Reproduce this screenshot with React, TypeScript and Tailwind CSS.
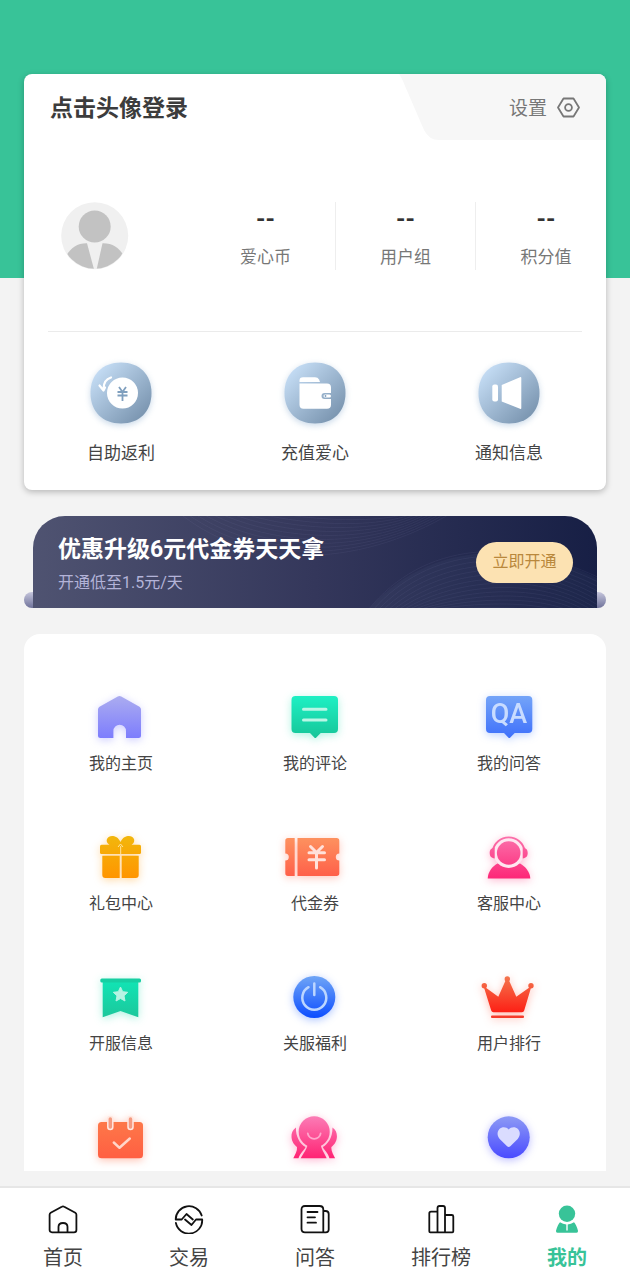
import type { ReactNode } from "react";

type Item = {
  label: string;
  icon: ReactNode;
  glow?: string;
  hideLabel?: boolean;
};

function Gradient({ id, from, to }: { id: string; from: string; to: string }) {
  return (
    <defs>
      <linearGradient id={id} x1="0" y1="4" x2="0" y2="46" gradientUnits="userSpaceOnUse">
        <stop offset="0" stopColor={from} />
        <stop offset="1" stopColor={to} />
      </linearGradient>
    </defs>
  );
}

const stats = ["爱心币", "用户组", "积分值"];

// 卡片底部的三个快捷入口
const actions: Item[] = [
  {
    label: "自助返利",
    icon: (
      <>
        <path
          d="M21 15.500C16 17 13.500 21 13.500 27M9.500 23.500L13.500 28.500L15 25.500"
          fill="none"
          stroke="#fff"
          strokeWidth="2.200"
          strokeLinecap="round"
          strokeLinejoin="round"
        />
        <circle cx="32.500" cy="31" r="15.500" fill="#fff" />
        <path
          d="M29 25L32.500 30L36 25M27.500 30H37.500M27.500 33.500H37.500M32.500 30V39"
          fill="none"
          stroke="#7f9fbe"
          strokeWidth="1.800"
        />
      </>
    ),
  },
  {
    label: "充值爱心",
    icon: (
      <>
        <path d="M15.500 20V18.500Q15.500 15.300 19 15.300H31Q34 15.300 35 17.500L36 20Z" fill="#fff" />
        <path
          d="M15.500 21.500H43Q47 21.500 47 25.500V31H40.500A3 3 0 0 0 40.500 37H47V42.700Q47 46.700 43 46.700H19.500Q15.500 46.700 15.500 42.700Z"
          fill="#fff"
        />
        <rect x="39.500" y="32.500" width="7.500" height="3" rx="1.500" fill="#fff" />
        <circle cx="41.500" cy="34" r="0.900" fill="#7f9fbe" />
      </>
    ),
  },
  {
    label: "通知信息",
    icon: (
      <>
        <rect x="14.300" y="22.500" width="5.700" height="17" rx="2" fill="#fff" />
        <path d="M23.700 23L42 15.200Q43.300 14.700 43.300 16V46Q43.300 47.300 42 46.700L23.700 39.500Z" fill="#fff" />
      </>
    ),
  },
];

// 功能宫格
const features: Item[] = [
  {
    label: "我的主页",
    glow: "drop-shadow-[0_2px_4px_rgba(130,130,255,0.4)]",
    icon: (
      <>
        <Gradient id="g-home" from="#abacf0" to="#7d7dfd" />
        <path
          d="M26.800 4.600Q28.500 3.600 30.200 4.600L48.500 14.800Q50 15.800 50 17.500V43.500Q50 46 47.500 46H35V39A6.300 6.300 0 0 0 22.400 39V46H9.500Q7 46 7 43.500V17.500Q7 15.800 8.500 14.800Z"
          fill="url(#g-home)"
        />
      </>
    ),
  },
  {
    label: "我的评论",
    glow: "drop-shadow-[0_2px_4px_rgba(20,220,170,0.35)]",
    icon: (
      <>
        <Gradient id="g-comment" from="#1ef0c4" to="#16c598" />
        <path
          d="M10.500 4H49Q53 4 53 8V37Q53 41 49 41H35.700L31.300 45.500Q30.300 46.500 29.300 45.500L25 41H10.500Q6.500 41 6.500 37V8Q6.500 4 10.500 4Z"
          fill="url(#g-comment)"
        />
        <path d="M18.500 17.300H41M18.500 28H41" stroke="#b9f6e5" strokeWidth="3" strokeLinecap="round" />
      </>
    ),
  },
  {
    label: "我的问答",
    glow: "drop-shadow-[0_2px_4px_rgba(60,120,255,0.35)]",
    icon: (
      <>
        <Gradient id="g-qa" from="#74a4f8" to="#3e70fb" />
        <path
          d="M11 4H49.300Q53.300 4 53.300 8V37Q53.300 41 49.300 41H35.700L31.300 45.500Q30.300 46.500 29.300 45.500L25 41H11Q7 41 7 37V8Q7 4 11 4Z"
          fill="url(#g-qa)"
        />
        <text x="30" y="31" textAnchor="middle" fontSize="27" fontWeight="500" fill="#c9dcff">
          QA
        </text>
      </>
    ),
  },
  {
    label: "礼包中心",
    glow: "drop-shadow-[0_2px_4px_rgba(255,150,0,0.35)]",
    icon: (
      <>
        <Gradient id="g-gift" from="#f2b70c" to="#ff9500" />
        <g fill="url(#g-gift)">
          <path d="M29.500 10C27.500 5.500 24 4 21 4C16.500 4 14.500 8 16.500 11L19 13.500H40L42.500 11C44.500 8 42.500 4 38 4C35 4 31.500 5.500 29.500 10Z" />
          <rect x="9" y="12.700" width="41" height="9.200" rx="1.500" />
          <path d="M11.300 23.700H28.700V46H14.300Q11.300 46 11.300 43ZM30.700 23.700H47.700V43Q47.700 46 44.700 46H30.700Z" />
        </g>
        <path d="M27 15L29.500 12L32 15M29.700 14V22" fill="none" stroke="#ffe3a0" strokeWidth="1" />
      </>
    ),
  },
  {
    label: "代金券",
    glow: "drop-shadow-[0_2px_4px_rgba(255,100,70,0.35)]",
    icon: (
      <>
        <Gradient id="g-coupon" from="#fd9460" to="#ff5d48" />
        <path
          d="M3 6H9.700V44H3Q0.300 44 0.300 41.300V28.500A3.500 3.500 0 0 0 0.300 21.500V8.700Q0.300 6 3 6ZM12.500 6H51.500Q54.300 6 54.300 8.700V21.500A3.500 3.500 0 0 0 54.300 28.500V41.300Q54.300 44 51.500 44H12.500Z"
          fill="url(#g-coupon)"
        />
        <path
          d="M25.500 14.500L31.500 20.500L37.500 14.500M24 20.700H39.500M24 27.700H39.500M31.500 20.700V36"
          fill="none"
          stroke="#ffe1da"
          strokeWidth="3"
          strokeLinecap="round"
        />
      </>
    ),
  },
  {
    label: "客服中心",
    glow: "drop-shadow-[0_2px_4px_rgba(255,60,130,0.35)]",
    icon: (
      <>
        <Gradient id="g-service" from="#fb72ac" to="#fd2878" />
        <path d="M8.700 46.500C9 40 13 34.500 18.500 31.500H41C46.500 34.500 51 40 51.300 46.500Z" fill="url(#g-service)" />
        <circle cx="29.700" cy="21" r="15" fill="#ffe6f0" />
        <circle cx="29.700" cy="21" r="11.800" fill="url(#g-service)" />
        <path d="M13.700 19A16.200 16.200 0 0 1 45.700 19" fill="none" stroke="url(#g-service)" strokeWidth="1.800" />
        <path
          d="M15.700 15.500V26.500C12 26 10.700 24 10.700 21S12 16 15.700 15.500ZM43.700 15.500V26.500C47.400 26 48.700 24 48.700 21S47.400 16 43.700 15.500Z"
          fill="url(#g-service)"
        />
      </>
    ),
  },
  {
    label: "开服信息",
    glow: "drop-shadow-[0_2px_4px_rgba(20,220,170,0.35)]",
    icon: (
      <>
        <Gradient id="g-server" from="#10e8b8" to="#1cc79b" />
        <path d="M11.700 8H47.300V45.300L29.500 39L11.700 45.300Z" fill="url(#g-server)" />
        <rect x="9.300" y="6.500" width="40.700" height="4" rx="1.500" fill="#17cfa2" />
        <path
          d="M29.500 15L31.700 19.700L36.700 20.300L33 23.800L34 29L29.500 26.500L25 29L26 23.800L22.300 20.300L27.300 19.700Z"
          fill="#b6f4e3"
          stroke="#b6f4e3"
          strokeLinejoin="round"
        />
      </>
    ),
  },
  {
    label: "关服福利",
    glow: "drop-shadow-[0_2px_4px_rgba(50,110,255,0.4)]",
    icon: (
      <>
        <Gradient id="g-power" from="#6fa5f6" to="#0c4dff" />
        <circle cx="29.300" cy="25" r="21" fill="url(#g-power)" />
        <path
          d="M23.500 15.200A12 12 0 1 0 35.100 15.200M29.300 11.500V23"
          fill="none"
          stroke="#bcd6ff"
          strokeWidth="2.500"
          strokeLinecap="round"
        />
      </>
    ),
  },
  {
    label: "用户排行",
    glow: "drop-shadow-[0_2px_4px_rgba(255,70,40,0.35)]",
    icon: (
      <>
        <Gradient id="g-crown" from="#f3764e" to="#ff120c" />
        <g fill="url(#g-crown)">
          <path d="M4.500 14L19.300 24.700L26.800 8H29.800L37.300 24.700L52.500 14L45.200 38.500Q44.800 40.300 43 40.300H14.500Q12.700 40.300 12.200 38.500Z" />
          <circle cx="5.300" cy="13.700" r="2.700" />
          <circle cx="28.300" cy="7" r="2.700" />
          <circle cx="52" cy="13.700" r="2.700" />
        </g>
        <rect x="12" y="43.500" width="33" height="2.600" rx="1" fill="#f53b2b" />
      </>
    ),
  },
  {
    label: "每日签到",
    hideLabel: true,
    glow: "drop-shadow-[0_2px_4px_rgba(255,100,60,0.4)]",
    icon: (
      <>
        <Gradient id="g-calendar" from="#fd7c4a" to="#ff5f42" />
        <rect x="7" y="10" width="45" height="36.300" rx="3.500" fill="url(#g-calendar)" />
        <g fill="#f59a80" stroke="#ffe9e2" strokeWidth="1.500">
          <rect x="16.800" y="4.500" width="5" height="13" rx="2.500" />
          <rect x="37" y="4.500" width="5" height="13" rx="2.500" />
        </g>
        <path
          d="M22.800 30.500L28.500 35.800L38.800 26.500"
          fill="none"
          stroke="#ffd6c9"
          strokeWidth="2.500"
          strokeLinecap="round"
          strokeLinejoin="round"
        />
      </>
    ),
  },
  {
    label: "邀请好友",
    hideLabel: true,
    glow: "drop-shadow-[0_2px_4px_rgba(255,50,130,0.35)]",
    icon: (
      <>
        <Gradient id="g-invite" from="#fb7cb6" to="#ff2474" />
        <g fill="url(#g-invite)">
          <path d="M23 32H35.500C36.500 38 39.500 41 41.700 46.300H15.700C18.500 41 21.500 38 23 32Z" />
          <circle cx="29.200" cy="19.700" r="15.500" />
          <path d="M11 15.500C7.500 18 6.300 21 6.500 25C6.800 30 9.500 33 12 35C12.500 39 10 42.500 8.300 46.300H13.500C15 41 19.500 38 20.500 35C15 32 10.500 24.500 11 15.500Z" />
          <path d="M47.400 15.500C50.900 18 52.100 21 51.900 25C51.600 30 48.900 33 46.400 35C45.900 39 48.400 42.500 50.100 46.300H44.400C43.400 41 38.900 38 37.900 35C43.400 32 47.900 24.500 47.400 15.500Z" />
        </g>
        <path
          d="M22.800 21.500A6.500 6.500 0 0 0 35.600 21.500"
          fill="none"
          stroke="#ffa6cc"
          strokeWidth="1.800"
          strokeLinecap="round"
        />
      </>
    ),
  },
  {
    label: "我的收藏",
    hideLabel: true,
    glow: "drop-shadow-[0_2px_4px_rgba(90,90,255,0.4)]",
    icon: (
      <>
        <Gradient id="g-heart" from="#8d9af5" to="#4a4bff" />
        <circle cx="29.700" cy="25.300" r="21" fill="url(#g-heart)" />
        <path
          d="M29.700 17.500C32 14.500 36.500 14.500 39 17C41.700 20 41.200 24 38.700 27L31.300 34.300Q29.700 35.800 28.100 34.300L20.700 27C18.200 24 17.700 20 20.400 17C22.900 14.500 27.400 14.500 29.700 17.500Z"
          fill="#dadcff"
        />
      </>
    ),
  },
];

const tabs: Item[] = [
  {
    label: "首页",
    icon: (
      <path d="M13.800 2.700Q15 2 16.200 2.700L27.300 8.800Q28.400 9.500 28.400 10.700V26Q28.400 28.300 26 28.300H4Q1.600 28.300 1.600 26V10.700Q1.600 9.500 2.700 8.800ZM10.500 28V22.800Q10.500 19 15 19T19.500 22.800V28" />
    ),
  },
  {
    label: "交易",
    icon: (
      <path d="M27.700 11.500A13.300 13.300 0 0 0 1.700 15.500H7.700L12.500 10L18.800 15.500M1.900 19A13.300 13.300 0 0 0 28.200 15.500H22L17.500 21L11 15.500" />
    ),
  },
  {
    label: "问答",
    icon: (
      <path d="M5 2H19.500Q23.300 2 23.300 5.500V28.300H5Q1.500 28.300 1.500 25V5.500Q1.500 2 5 2ZM23.300 7H25.500Q28.700 7 28.700 10V25.500Q28.700 28.300 25.800 28.300H23.300M7.500 8H17.500M7.500 13.300H15M7.500 18.700H16" />
    ),
  },
  {
    label: "排行榜",
    icon: (
      <path d="M11.500 28.300H4.300Q3.300 28.300 3.300 27.300V9.500Q3.300 7.700 5 7.700H11.500M11.500 28.300V4Q11.500 2 13.500 2H17Q19 2 19 4V28.300ZM19 11H25.700Q27.300 11 27.300 12.500V27.300Q27.300 28.300 26.300 28.300H19" />
    ),
  },
  {
    label: "我的",
    icon: (
      <g fill="currentColor" stroke="none">
        <circle cx="15" cy="9.800" r="8.200" />
        <path d="M8 18.300Q11 20.300 14.300 20.500V26.500H15.700V20.500Q19 20.300 22 18.300Q24 20 26 26.700Q26.300 28.700 24.500 28.700H5.500Q3.700 28.700 4 26.700Q6 20 8 18.300Z" />
      </g>
    ),
  },
];

function ProfileCard() {
  return (
    <section className="-mt-[204px] overflow-hidden rounded-lg bg-white shadow-[0_2px_6px_rgba(0,0,0,0.25)]">
      {/* 标题和设置 */}
      <div className="flex h-[66px] items-center justify-between pl-[26px]">
        <h1 className="pt-1 text-[23px] leading-8 font-bold text-[#3c3c3c]">点击头像登录</h1>
        <button
          type="button"
          className="relative flex h-full w-[207px] items-center justify-end gap-[9px] pr-[25px] text-[19px] text-[#777]"
        >
          <svg
            className="absolute inset-0 size-full"
            viewBox="0 0 207 66"
            preserveAspectRatio="none"
            aria-hidden="true"
          >
            <path d="M0 0Q3 4 6 12L25 56Q30 66 40 66H207V0Z" fill="#f7f7f7" />
          </svg>
          <span className="relative pt-1">设置</span>
          <svg
            className="relative size-[25px]"
            viewBox="0 0 25 25"
            fill="none"
            stroke="currentColor"
            strokeWidth="1.800"
            strokeLinejoin="round"
          >
            <path d="M7.500 3.500H17.500L23 12.500L17.500 21.500H7.500L2 12.500Z" />
            <circle cx="12.500" cy="12.500" r="3.400" />
          </svg>
        </button>
      </div>

      {/* 头像和积分 */}
      <div className="mt-[62px] flex gap-[67px] pl-[37px]">
        <button type="button" aria-label="头像" className="size-[68px] shrink-0">
          <svg viewBox="0 0 68 68" className="size-full">
            <defs>
              <clipPath id="avatar-clip">
                <circle cx="33.700" cy="33.700" r="33" />
              </clipPath>
            </defs>
            <circle cx="33.700" cy="33.700" r="33.500" fill="#f0f0f0" />
            <g clipPath="url(#avatar-clip)" fill="#c2c2c2">
              <circle cx="33.700" cy="24.500" r="16" />
              <path d="M4 56C9 46 16 41 26 41.200L33.200 68H4Z" />
              <path d="M64 56C59 46 52 41 41.500 41.200L35.500 68H64Z" />
            </g>
          </svg>
        </button>
        <dl className="-mr-[10px] grid flex-1 grid-cols-3 divide-x divide-[#eee]">
          {stats.map((name) => (
            <div key={name} className="flex flex-col-reverse items-center justify-end gap-3 pt-1">
              <dt className="text-[17px] leading-[26px] text-[#777]">{name}</dt>
              <dd className="text-2xl leading-[26px] font-bold text-[#333]">--</dd>
            </div>
          ))}
        </dl>
      </div>

      <hr className="mx-6 mt-[61px] border-[#ebebeb]" />

      <div className="grid grid-cols-3 pt-[30px] pb-[25px]">
        {actions.map((item) => (
          <button key={item.label} type="button" className="flex flex-col items-center gap-[17px]">
            <svg
              viewBox="0 0 62 62"
              className="size-[62px] overflow-visible drop-shadow-[0_2px_3px_rgba(120,160,200,0.4)]"
            >
              <defs>
                <linearGradient id="g-action" x1="0.100" y1="0.100" x2="0.900" y2="0.900">
                  <stop offset="0" stopColor="#c6def6" />
                  <stop offset="1" stopColor="#7893ae" />
                </linearGradient>
              </defs>
              <path
                d="M31 0.500C49.500 0.500 61.500 12.500 61.500 31S49.500 61.500 31 61.500S0.500 49.500 0.500 31S12.500 0.500 31 0.500Z"
                fill="url(#g-action)"
              />
              {item.icon}
            </svg>
            <span className="text-[17px] leading-6 text-[#444]">{item.label}</span>
          </button>
        ))}
      </div>
    </section>
  );
}

function VipBanner() {
  const waves = Array.from({ length: 14 }, (_, i) => i * 5);

  return (
    <section className="relative mt-[26px] px-[9px]">
      {/* 底座 */}
      <div className="absolute inset-x-0 bottom-0 h-4 rounded-full bg-linear-to-b from-[#c6c6dc] to-[#70739a]" />
      <div className="relative flex h-[92px] items-center justify-between overflow-hidden rounded-t-[32px] bg-linear-to-r from-[#4f5371] via-[#34375b] to-[#171f45] pr-6 pl-[25px]">
        <svg
          className="absolute inset-0 size-full"
          viewBox="0 0 564 92"
          preserveAspectRatio="none"
          fill="none"
          stroke="#8f93bb"
          strokeOpacity="0.090"
          aria-hidden="true"
        >
          <path
            d="M335 94C390 30 480 20 564 62V94Z"
            fill="#8f93bb"
            fillOpacity="0.060"
            stroke="none"
          />
          {waves.map((n) => (
            <path key={n} d={`M${150 + n} ${-n / 3}C${220 + n} ${54 - n} ${330 + n} ${54 - n} ${430 - n} -10`} />
          ))}
          {waves.map((n) => (
            <path key={n} d={`M${335 + n} 94C${390 + n} ${26 + n} ${480 + n} ${18 + n} 575 ${66 + n}`} />
          ))}
        </svg>
        <div className="relative pt-[6px]">
          <h2 className="text-[23px] leading-8 font-bold text-white">优惠升级6元代金券天天拿</h2>
          <p className="mt-[3px] text-base leading-7 text-[#b3b3d8]">开通低至1.5元/天</p>
        </div>
        <button
          type="button"
          className="relative h-[41px] w-[97px] shrink-0 rounded-full bg-[#fce2b2] text-base text-[#b9883c]"
        >
          立即开通
        </button>
      </div>
    </section>
  );
}

function FeatureGrid() {
  return (
    <section className="mt-[26px] grid grid-cols-3 gap-y-14 rounded-t-2xl bg-white pt-[58px] pb-10">
      {features.map((item) => (
        <button
          key={item.label}
          type="button"
          aria-label={item.hideLabel ? item.label : undefined}
          className="flex flex-col items-center gap-2"
        >
          <svg viewBox="0 0 60 52" className={`h-[52px] w-[60px] overflow-visible ${item.glow}`}>
            {item.icon}
          </svg>
          {!item.hideLabel && <span className="text-base leading-6 text-[#444]">{item.label}</span>}
        </button>
      ))}
    </section>
  );
}

function TabBar() {
  return (
    <nav className="grid grid-cols-5 border-t-2 border-[#e6e6e6] bg-white pt-4 pb-2">
      {tabs.map((tab) => {
        const active = tab.label === "我的";
        return (
          <a
            key={tab.label}
            href="#"
            aria-current={active ? "page" : undefined}
            className={`flex flex-col items-center gap-[10px] ${active ? "font-bold text-[#38c398]" : "text-[#444]"}`}
          >
            <svg
              viewBox="0 0 30 30"
              className={`size-[30px] ${active ? "" : "text-[#111]"}`}
              fill="none"
              stroke="currentColor"
              strokeWidth="1.800"
              strokeLinecap="round"
              strokeLinejoin="round"
            >
              {tab.icon}
            </svg>
            <span className="text-xl leading-7">{tab.label}</span>
          </a>
        );
      })}
    </nav>
  );
}

export default function App() {
  return (
    <div className="flex h-screen flex-col bg-[#f3f3f3] font-[Roboto,'Noto_Sans_CJK_SC',sans-serif]">
      <main className="mb-[15px] min-h-0 flex-1 overflow-y-auto [scrollbar-width:none]">
        <div className="h-[278px] bg-[#38c398]" />
        <div className="px-6">
          <ProfileCard />
          <VipBanner />
          <FeatureGrid />
        </div>
      </main>
      <TabBar />
    </div>
  );
}
